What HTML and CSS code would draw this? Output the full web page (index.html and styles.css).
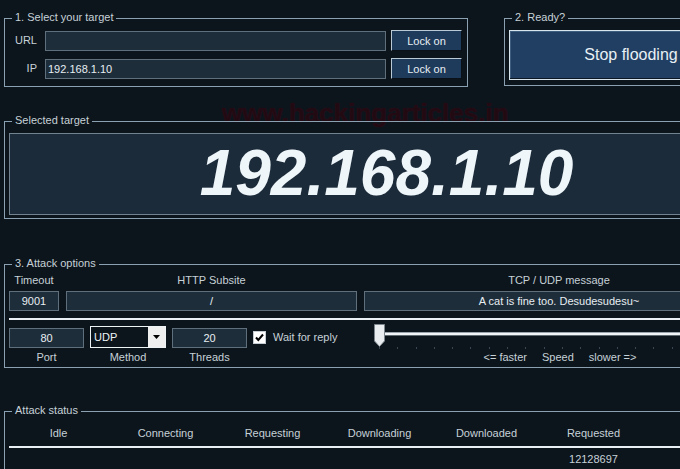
FILE: index.html
```html
<!DOCTYPE html>
<html>
<head>
<meta charset="utf-8">
<link rel="stylesheet" href="styles.css">
</head>
<body>
<div class="screen">
  <div class="watermark">www.hackingarticles.in</div>

  <div class="top">
    <div class="group g-target">
      <span class="legend">1. Select your target</span>
      <div class="target-grid">
        <span class="lbl">URL</span>
        <span class="input"></span>
        <button class="btn">Lock on</button>
        <span class="lbl">IP</span>
        <span class="input">192.168.1.10</span>
        <button class="btn">Lock on</button>
      </div>
    </div>
    <div class="group g-ready">
      <span class="legend">2. Ready?</span>
      <button class="big-btn">Stop flooding</button>
    </div>
  </div>

  <div class="group g-selected">
    <span class="legend">Selected target</span>
    <div class="display">192.168.1.10</div>
  </div>

  <div class="group g-options">
    <span class="legend">3. Attack options</span>
    <div class="opt-grid">
      <span class="cap">Timeout</span>
      <span class="cap">HTTP Subsite</span>
      <span class="cap">TCP / UDP message</span>
    </div>
    <div class="opt-grid inputs">
      <span class="input center">9001</span>
      <span class="input center">/</span>
      <span class="input center">A cat is fine too. Desudesudesu~</span>
    </div>
    <div class="sep"></div>
    <div class="ctrl-grid">
      <span class="input center">80</span>
      <div class="combo">
        <span class="combo-val">UDP</span>
        <span class="combo-arrow"><svg width="7" height="4" viewBox="0 0 7 4"><path d="M0 0H7L3.5 4Z" fill="#000"/></svg></span>
      </div>
      <span class="input center">20</span>
      <div class="check-wrap">
        <span class="check"><svg width="11" height="11" viewBox="0 0 11 11"><path d="M2 5.5L4.3 8L9 2.5" fill="none" stroke="#000" stroke-width="2"/></svg></span>
        <span class="cap">Wait for reply</span>
      </div>
      <div class="slider">
        <span class="track"></span>
        <span class="ticks"></span>
        <svg class="thumb" width="11" height="23" viewBox="0 0 11 23"><path d="M0.5 0.5H10.5V17L5.5 22.5L0.5 17Z" fill="#e9edef" stroke="#7d868c"/></svg>
      </div>
      <span class="cap">Port</span>
      <span class="cap">Method</span>
      <span class="cap">Threads</span>
      <span></span>
      <div class="speed">
        <span class="cap">&lt;= faster</span>
        <span class="cap">Speed</span>
        <span class="cap">slower =&gt;</span>
      </div>
    </div>
  </div>

  <div class="group g-status">
    <span class="legend">Attack status</span>
    <div class="status-grid">
      <span>Idle</span><span>Connecting</span><span>Requesting</span><span>Downloading</span><span>Downloaded</span><span>Requested</span>
    </div>
    <div class="sep status-sep"></div>
    <div class="status-grid">
      <span></span><span></span><span></span><span></span><span></span><span>12128697</span>
    </div>
  </div>
</div>
</body>
</html>
```

FILE: styles.css
```css
html, body {
  margin: 0;
  padding: 0;
  background: #0d151c;
  overflow: hidden;
}

body {
  width: 680px;
  height: 469px;
  font-family: "Liberation Sans", Arial, sans-serif;
  font-size: 11px;
  color: #c6d1d8;
}

.screen {
  position: relative;
  width: 780px;
  padding: 18px 0 0 4px;
}

.watermark {
  position: absolute;
  left: 222px;
  top: 98px;
  font-size: 26px;
  font-weight: bold;
  line-height: 30px;
  color: #220a13;
  text-shadow: 0 0 1px #3a1020;
  z-index: 0;
}

.group {
  position: relative;
  z-index: 1;
  border: 1px solid #8ba0b0;
  box-sizing: border-box;
}

.legend {
  position: absolute;
  top: -8px;
  left: 7px;
  padding: 0 3px;
  line-height: 13px;
  background: #0d151c;
  color: #c6d1d8;
  white-space: nowrap;
}

.top {
  display: flex;
}

.g-target {
  width: 464px;
  height: 69px;
  padding: 11px 5px 0 0;
}

.target-grid {
  display: grid;
  grid-template-columns: 32px 349px 76px;
  grid-template-rows: 21px 21px;
  row-gap: 7px;
}

.target-grid .input {
  margin-left: 8px;
}

.target-grid .btn {
  margin-left: 5px;
}

.lbl {
  text-align: right;
  line-height: 21px;
}

.input {
  align-self: end;
  height: 20px;
  box-sizing: border-box;
  background: #1d2d3a;
  border: 1px solid #5f6f7b;
  color: #e8eef2;
  line-height: 18px;
  padding-left: 2px;
  white-space: nowrap;
  overflow: hidden;
}

.input.center {
  text-align: center;
  padding-left: 0;
}

.btn {
  height: 21px;
  padding: 0;
  margin: 0;
  font-family: inherit;
  font-size: 11px;
  color: #e6eef3;
  background: #1f3b5b;
  border: 1px solid;
  border-color: #b9cad6 #0a1118 #0a1118 #b9cad6;
}

.g-ready {
  margin-left: 36px;
  width: 264px;
  height: 68px;
  padding: 11px 0 0 4px;
}

.big-btn {
  display: block;
  width: 244px;
  height: 50px;
  margin: 0;
  padding: 0;
  font-family: inherit;
  font-size: 16px;
  color: #e8f0f5;
  background: #203f62;
  border: 1px solid #d9e5ec;
  box-shadow: inset -1px -1px 0 #0c1822, inset 1px 1px 0 #3e5e80;
}

.g-selected {
  margin-top: 34px;
  width: 765px;
  height: 98px;
  padding: 11px 0 0 4px;
}

.display {
  width: 755px;
  height: 82px;
  box-sizing: border-box;
  background: #1c2b3a;
  border: 1px solid #72838f;
  font-size: 64px;
  font-weight: bold;
  font-style: italic;
  line-height: 78px;
  text-align: center;
  color: #eef6fa;
}

.g-options {
  margin-top: 45px;
  width: 765px;
  height: 104px;
  padding: 9px 0 0 4px;
}

.opt-grid {
  display: grid;
  grid-template-columns: 50px 291px 390px;
  column-gap: 7px;
  line-height: 13px;
  text-align: center;
}

.opt-grid.inputs {
  margin-top: 4px;
}

.sep {
  height: 2px;
  background: #e9eff2;
}

.g-options .sep {
  margin-top: 7px;
  width: 760px;
}

.ctrl-grid {
  margin-top: 6px;
  display: grid;
  grid-template-columns: 75px 76px 75px 115px 372px;
  grid-template-rows: 22px 13px;
  column-gap: 6px;
  row-gap: 3px;
  align-items: center;
}

.cap {
  line-height: 13px;
  text-align: center;
  white-space: nowrap;
}

.combo {
  height: 22px;
  box-sizing: border-box;
  border: 1px solid #eef3f5;
  background: #0d151c;
  display: flex;
  align-items: stretch;
}

.combo-val {
  flex: 1;
  line-height: 20px;
  padding-left: 3px;
  color: #eef3f6;
}

.combo-arrow {
  width: 17px;
  background: #efefef;
  display: flex;
  align-items: center;
  justify-content: center;
}

.check-wrap {
  display: flex;
  align-items: center;
  gap: 7px;
}

.check {
  width: 13px;
  height: 13px;
  box-sizing: border-box;
  background: #ffffff;
  border: 1px solid #c6cdd2;
  display: flex;
  align-items: center;
  justify-content: center;
}

.slider {
  position: relative;
  height: 22px;
}

.track {
  position: absolute;
  left: 10px;
  right: 0;
  top: 6px;
  height: 4px;
  box-sizing: border-box;
  border-top: 1px solid #9aa4aa;
  border-bottom: 1px solid #5f6a70;
  background: #f2f5f7;
}

.ticks {
  position: absolute;
  left: 5px;
  right: 0;
  top: 21px;
  height: 2px;
  background: repeating-linear-gradient(to right, #3a4652 0 1px, transparent 1px 18.3px);
}

.thumb {
  position: absolute;
  left: 0;
  top: -2px;
}

.speed {
  display: flex;
  justify-content: center;
  gap: 15px;
}

.g-status {
  margin-top: 43px;
  width: 765px;
  height: 80px;
  padding-top: 14px;
}

.status-grid {
  display: grid;
  grid-template-columns: repeat(6, 107px);
  line-height: 14px;
  text-align: center;
  min-height: 14px;
}

.status-sep {
  margin: 6px 0 4px 4px;
  width: 760px;
}
```
